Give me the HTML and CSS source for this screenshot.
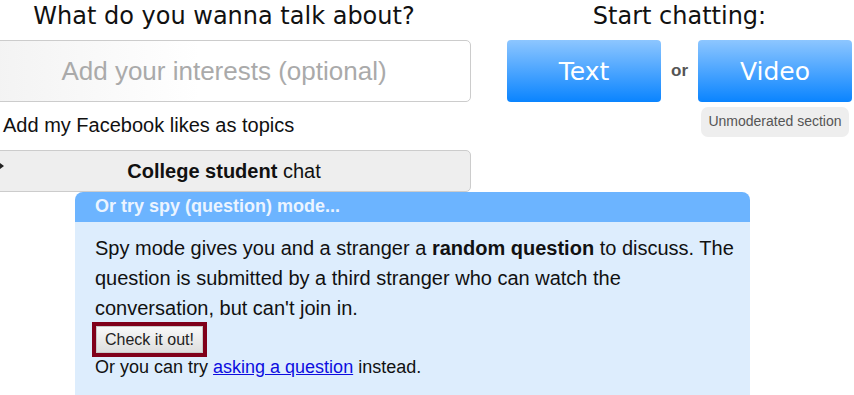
FILE: index.html
```html
<!DOCTYPE html>
<html lang="en">
<head>
    <meta charset="UTF-8">
    <title>Omegle</title>
    <link rel="stylesheet" href="styles.css">
</head>
<body>

    <div class="top">
        <div class="topics">
            <h2>What do you wanna talk about?</h2>
            <input type="text" class="interests" placeholder="Add your interests (optional)">
            <div class="fb-likes">Add my Facebook likes as topics</div>
            <div class="college">
                <svg class="college-icon" width="10" height="8" viewBox="0 0 10 8">
                    <path d="M0 3h6V1l4 3-4 3V5H0z" fill="#222"/>
                </svg>
                <b>College student</b> chat
            </div>
        </div>

        <div class="start">
            <h2>Start chatting:</h2>
            <div class="start-row">
                <div class="start-col">
                    <button class="chat-btn">Text</button>
                </div>
                <span class="or">or</span>
                <div class="start-col">
                    <button class="chat-btn">Video</button>
                    <div class="unmod">Unmoderated section</div>
                </div>
            </div>
        </div>
    </div>

    <div class="spy">
        <div class="spy-head">Or try spy (question) mode...</div>
        <div class="spy-body">
            <p>Spy mode gives you and a stranger a <b>random question</b> to discuss. The question is submitted by a third stranger who can watch the conversation, but can't join in.</p>
            <div class="check-wrap">
                <button class="check-btn">Check it out!</button>
            </div>
            <div class="ask">Or you can try <a href="#">asking a question</a> instead.</div>
        </div>
    </div>

</body>
</html>
```

FILE: styles.css
```css
body {
    margin: 0;
    font-family: "Liberation Sans", Arial, sans-serif;
    color: #111;
    background-color: #fff;
    overflow: hidden;
}

h2 {
    font-family: "DejaVu Sans", Verdana, sans-serif;
    font-weight: normal;
    font-size: 24px;
    line-height: 28px;
    text-align: center;
    margin: 0;
    padding-top: 2px;
    color: #111;
}

.top {
    display: flex;
    align-items: flex-start;
}

.topics {
    width: 494px;
    margin-left: -23px;
    flex-shrink: 0;
}

.interests {
    display: block;
    box-sizing: border-box;
    width: 100%;
    height: 62px;
    margin-top: 10px;
    border: 1px solid #ccc;
    border-radius: 5px;
    background: linear-gradient(to right, #f2f2f2, #fff 45%);
    font-family: "Liberation Sans", Arial, sans-serif;
    font-size: 26px;
    text-align: center;
    outline: none;
}

.interests::placeholder {
    color: #aaa;
}

.fb-likes {
    height: 48px;
    line-height: 46px;
    font-size: 20px;
    padding-left: 26px;
    color: #111;
}

.college {
    position: relative;
    box-sizing: border-box;
    height: 42px;
    line-height: 40px;
    border: 1px solid #ccc;
    border-radius: 5px;
    background-color: #eee;
    font-size: 20px;
    text-align: center;
}

.college-icon {
    position: absolute;
    left: 16px;
    top: 11px;
}

.start {
    width: 345px;
    margin-left: 36px;
    flex-shrink: 0;
}

.start-row {
    display: flex;
    align-items: flex-start;
    margin-top: 10px;
}

.start-col {
    width: 154px;
    display: flex;
    flex-direction: column;
    align-items: center;
}

.chat-btn {
    width: 154px;
    height: 62px;
    border: none;
    border-radius: 4px;
    background: linear-gradient(#8dc6ff, #0a84ff);
    color: #fff;
    font-family: "DejaVu Sans", Verdana, sans-serif;
    font-size: 25px;
    cursor: pointer;
}

.or {
    width: 37px;
    text-align: center;
    font-weight: bold;
    font-size: 17px;
    color: #555;
    line-height: 62px;
}

.unmod {
    margin-top: 5px;
    width: 148px;
    height: 30px;
    line-height: 29px;
    border-radius: 7px;
    background-color: #eee;
    color: #555;
    font-size: 14px;
    text-align: center;
}

.spy {
    width: 675px;
    margin-left: 75px;
}

.spy-head {
    height: 30px;
    line-height: 29px;
    padding-left: 20px;
    background-color: #6cb4ff;
    border-radius: 8px 8px 0 0;
    color: #ebf4ff;
    font-weight: bold;
    font-size: 18px;
}

.spy-body {
    background-color: #ddedfd;
    padding: 11px 8px 20px 20px;
}

.spy-body p {
    margin: 0;
    font-size: 20px;
    line-height: 30px;
    color: #111;
}

.check-wrap {
    display: inline-block;
    margin-top: -1px;
    margin-left: -3px;
    border: 4px solid #80001a;
}

.check-btn {
    display: block;
    height: 27px;
    padding: 0 8px;
    border: 1px solid #c8c8c8;
    background: linear-gradient(#f8f8f8, #dedede);
    font-family: "Liberation Sans", Arial, sans-serif;
    font-size: 16px;
    color: #222;
    cursor: pointer;
}

.ask {
    font-size: 18px;
    line-height: 20px;
    color: #111;
}

.ask a {
    color: #0d0de0;
}
```
